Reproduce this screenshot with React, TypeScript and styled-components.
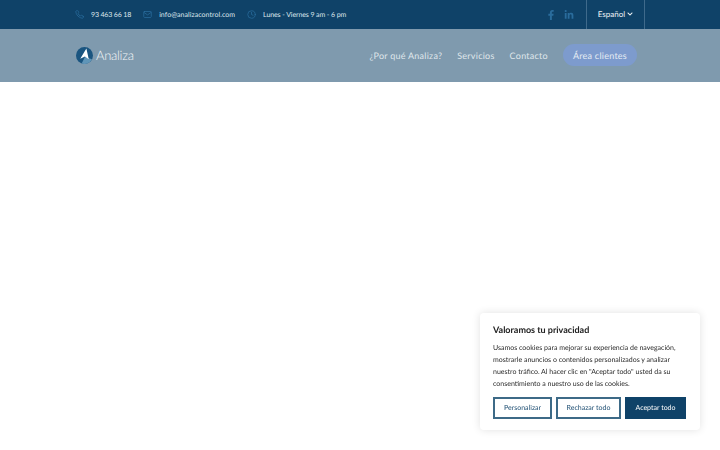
import React from 'react';
import styled, { createGlobalStyle } from 'styled-components';
import { FiPhone, FiMail, FiClock } from 'react-icons/fi';
import { FaFacebookF, FaLinkedinIn, FaChevronDown } from 'react-icons/fa';

const GlobalStyle = createGlobalStyle`
  html, body {
    margin: 0;
    padding: 0;
    background: #fff;
    font-family: Lato, "Liberation Sans", sans-serif;
    text-rendering: geometricPrecision;
  }
`;

const Page = styled.div`
  width: 720px;
  height: 450px;
  overflow: hidden;
`;

const TopBar = styled.div`
  height: 29px;
  background: #0f4268;
  display: flex;
  align-items: stretch;
  padding: 0 75px;
  color: #fff;
`;

const ContactItem = styled.div<{ $spacing?: number }>`
  display: flex;
  align-items: center;
  gap: 7px;
  margin-right: 12px;
  font-size: 7px;
  letter-spacing: ${(p) => p.$spacing ?? 0}px;
  color: #dfe7ed;
  white-space: nowrap;

  svg {
    width: 9px;
    height: 9px;
    color: #2a6c9c;
  }
`;

const Social = styled.div`
  margin-left: auto;
  display: flex;
  align-items: center;
  gap: 8px;
  padding-right: 12px;
  color: #2a6c9c;

  svg {
    width: 10px;
    height: 10px;
  }
`;

const Lang = styled.div`
  width: 59px;
  box-sizing: border-box;
  padding-bottom: 1px;
  border-left: 1px solid #3f6a8b;
  border-right: 1px solid #3f6a8b;
  display: flex;
  align-items: center;
  justify-content: center;
  gap: 2px;
  font-size: 8px;
  color: #f0f4f7;

  svg {
    width: 6px;
    height: 6px;
  }
`;

const Nav = styled.div`
  height: 53px;
  box-sizing: border-box;
  background: #7f9aae;
  display: flex;
  align-items: center;
  padding: 0 83px 1px 76px;
`;

const Logo = styled.div`
  display: flex;
  align-items: center;
  gap: 3px;
  font-size: 13px;
  font-weight: 300;
  color: #f2f5f7;
  letter-spacing: -0.3px;

  svg {
    width: 17px;
    height: 17px;
  }
`;

const Menu = styled.div`
  margin-left: auto;
  display: flex;
  align-items: center;
  gap: 15px;
`;

const MenuLink = styled.span`
  font-size: 9px;
  letter-spacing: 0.25px;
  color: #dfe6eb;
`;

const ClientButton = styled.span`
  height: 22px;
  padding: 0 10px;
  border-radius: 11px;
  background: #7d9bcd;
  display: flex;
  align-items: center;
  font-size: 9px;
  letter-spacing: 0.25px;
  color: #e4ebf3;
`;

const CookieCard = styled.div`
  position: fixed;
  left: 480px;
  top: 313px;
  width: 220px;
  height: 117px;
  box-sizing: border-box;
  padding: 11px 13px;
  background: #fff;
  border-radius: 4px;
  box-shadow: 0 0 8px rgba(0, 0, 0, 0.12);
`;

const CookieTitle = styled.div`
  font-size: 9px;
  font-weight: 700;
  line-height: 12px;
  color: #212121;
  margin-bottom: 6px;
`;

const CookieText = styled.p`
  margin: 0 0 7px;
  font-size: 7px;
  line-height: 12px;
  color: #2c2c2c;
  white-space: nowrap;
`;

const Buttons = styled.div`
  display: flex;
  gap: 4px;
`;

const CookieButton = styled.div<{ $solid?: boolean; $width: number }>`
  width: ${(p) => p.$width}px;
  height: 22px;
  box-sizing: border-box;
  display: flex;
  align-items: center;
  justify-content: center;
  font-size: 7px;
  border: 2px solid ${(p) => (p.$solid ? '#0f4268' : '#3d6a87')};
  background: ${(p) => (p.$solid ? '#0f4268' : '#fff')};
  color: ${(p) => (p.$solid ? '#fff' : '#1f4f73')};
`;

const App: React.FC = () => {
  return (
    <Page>
      <GlobalStyle />
      <TopBar>
        <ContactItem $spacing={-0.15}><FiPhone />93 463 66 18</ContactItem>
        <ContactItem $spacing={0.05}><FiMail />info@analizacontrol.com</ContactItem>
        <ContactItem $spacing={-0.1}><FiClock />Lunes - Viernes 9 am - 6 pm</ContactItem>
        <Social>
          <FaFacebookF />
          <FaLinkedinIn />
        </Social>
        <Lang>Español <FaChevronDown /></Lang>
      </TopBar>
      <Nav>
        <Logo>
          <svg viewBox="0 0 18 18">
            <circle cx="9" cy="9" r="9" fill="#1a5580" />
            <path d="M13.5 12 L17 13 A9 9 0 0 1 6 17.5 L10 9.5 Z" fill="#5f95b8" />
            <path d="M11 1.5 L13.5 13 L9.5 10 L4.5 12.5 Z" fill="#fff" />
          </svg>
          Analiza
        </Logo>
        <Menu>
          <MenuLink>¿Por qué Analiza?</MenuLink>
          <MenuLink>Servicios</MenuLink>
          <MenuLink>Contacto</MenuLink>
          <ClientButton>Área clientes</ClientButton>
        </Menu>
      </Nav>
      <CookieCard>
        <CookieTitle>Valoramos tu privacidad</CookieTitle>
        <CookieText>
          Usamos cookies para mejorar su experiencia de navegación,<br />
          mostrarle anuncios o contenidos personalizados y analizar<br />
          nuestro tráfico. Al hacer clic en "Aceptar todo" usted da su<br />
          consentimiento a nuestro uso de las cookies.
        </CookieText>
        <Buttons>
          <CookieButton $width={59}>Personalizar</CookieButton>
          <CookieButton $width={65}>Rechazar todo</CookieButton>
          <CookieButton $width={61} $solid>Aceptar todo</CookieButton>
        </Buttons>
      </CookieCard>
    </Page>
  );
};

export default App;
